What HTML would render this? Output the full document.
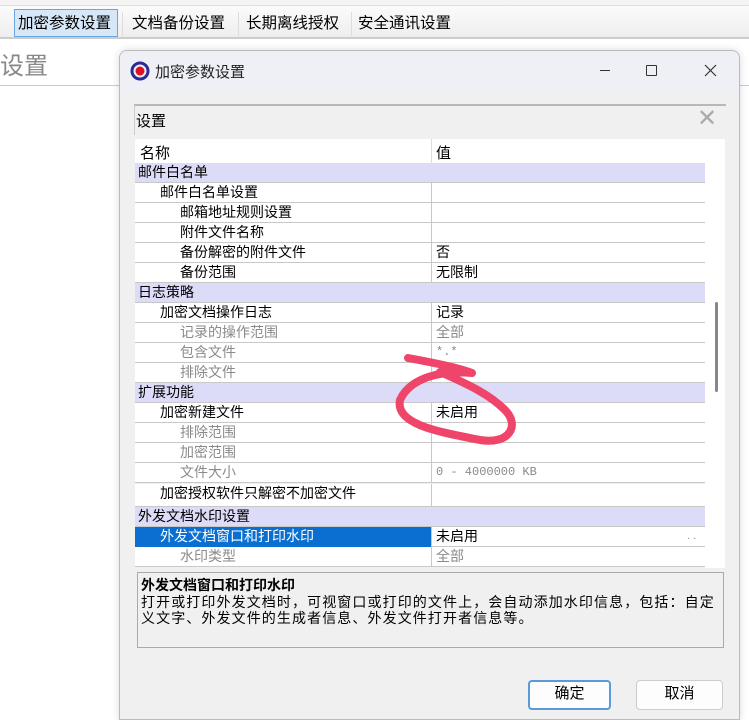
<!DOCTYPE html><html><head><meta charset="utf-8"><style>
*{margin:0;padding:0;box-sizing:border-box}
body{width:749px;height:705px;overflow:hidden;background:#fff;position:relative;font-family:"Liberation Sans","Noto Sans CJK SC",sans-serif;font-size:14px;color:#000}
.a{position:absolute}
.row{position:absolute;left:135px;width:570px;height:20px;border-bottom:1px solid #c8c8c8;background:#fff;line-height:19px;font-size:14px;white-space:nowrap}
.row .v{position:absolute;left:296px;top:0;height:20px;border-left:1px solid #c8c8c8;padding-left:4px}
.cat{background:#dcdcf8}
.g{color:#8a8a8a}
.tb{position:absolute;top:11px;font-size:15.5px;white-space:nowrap}
</style></head><body>
<div class="a" style="left:0;top:0;width:749px;height:6px;background:#f4f4f4;border-bottom:1px solid #ddd"></div>
<div class="a" style="left:0;top:6px;width:749px;height:33px;background:linear-gradient(#fbfbfb,#eeeeee);border-bottom:2px solid #ccc"></div>
<div class="a" style="left:14px;top:9px;width:104px;height:28px;border:1px solid #6aa6dc;background:#d6e8f8"></div>
<div class="tb" style="left:18px">加密参数设置</div>
<div class="tb" style="left:132px">文档备份设置</div>
<div class="tb" style="left:246px">长期离线授权</div>
<div class="tb" style="left:358px">安全通讯设置</div>
<div class="a" style="left:122px;top:12px;width:1px;height:24px;background:#ddd"></div>
<div class="a" style="left:238px;top:12px;width:1px;height:24px;background:#ddd"></div>
<div class="a" style="left:351px;top:12px;width:1px;height:24px;background:#ddd"></div>
<div class="a" style="left:0;top:46px;font-size:24px;color:#888">设置</div>
<div class="a" style="left:0;top:85px;width:749px;height:1px;background:#ccc"></div>
<div class="a" style="left:119px;top:50px;width:621px;height:670px;background:#f0f0f0;border:1px solid #bbb;border-radius:8px 8px 0 0;box-shadow:0 0 8px rgba(0,0,0,.15);overflow:hidden">
<div class="a" style="left:0;top:0;width:621px;height:40px;background:#eff0f6"></div>
</div>
<svg class="a" style="left:130px;top:61px" width="20" height="20" viewBox="0 0 20 20"><circle cx="10" cy="10" r="8" fill="none" stroke="#2a2a9a" stroke-width="3"/><circle cx="10" cy="10" r="4.5" fill="#e01020"/></svg>
<div class="a" style="left:155px;top:61px;font-size:15px;color:#222">加密参数设置</div>
<div class="a" style="left:600px;top:70px;width:10px;height:1px;background:#333"></div>
<div class="a" style="left:646px;top:65px;width:11px;height:11px;border:1px solid #333;border-radius:1px"></div>
<svg class="a" style="left:704px;top:64px" width="13" height="13"><path d="M1,1L12,12M12,1L1,12" stroke="#333" stroke-width="1.2"/></svg>
<div class="a" style="left:134px;top:104px;width:592px;height:31px;background:#f0f0f0;border-top:2px solid #b8b8b8;border-left:1px solid #ccc"></div>
<div class="a" style="left:136px;top:110px;font-size:15px">设置</div>
<div class="a" style="left:697px;top:104px;font-size:24px;color:#aaa">✕</div>
<div class="a" style="left:135px;top:139px;width:590px;height:24px;background:#fff"></div>
<div class="a" style="left:140px;top:142px;font-size:15px">名称</div>
<div class="a" style="left:431px;top:139px;width:1px;height:24px;background:#ddd"></div>
<div class="a" style="left:436px;top:142px;font-size:15px">值</div>
<div class="a" style="left:705px;top:163px;width:20px;height:405px;background:#fff"></div>
<div class="a" style="left:715px;top:302px;width:3px;height:90px;background:#888;border-radius:2px"></div>

<div class="row cat" style="top:163px"><span style="padding-left:3px">邮件白名单</span></div>
<div class="row" style="top:183px"><span style="padding-left:25px">邮件白名单设置</span><span class="v"></span></div>
<div class="row" style="top:203px"><span style="padding-left:45px">邮箱地址规则设置</span><span class="v"></span></div>
<div class="row" style="top:223px"><span style="padding-left:45px">附件文件名称</span><span class="v"></span></div>
<div class="row" style="top:243px"><span style="padding-left:45px">备份解密的附件文件</span><span class="v">否</span></div>
<div class="row" style="top:263px"><span style="padding-left:45px">备份范围</span><span class="v">无限制</span></div>
<div class="row cat" style="top:283px"><span style="padding-left:3px">日志策略</span></div>
<div class="row" style="top:303px"><span style="padding-left:25px">加密文档操作日志</span><span class="v">记录</span></div>
<div class="row g" style="top:323px"><span style="padding-left:45px">记录的操作范围</span><span class="v">全部</span></div>
<div class="row g" style="top:343px"><span style="padding-left:45px">包含文件</span><span class="v" style="font-family:'Liberation Mono',monospace;font-size:12px">*.*</span></div>
<div class="row g" style="top:363px"><span style="padding-left:45px">排除文件</span><span class="v"></span></div>
<div class="row cat" style="top:383px"><span style="padding-left:3px">扩展功能</span></div>
<div class="row" style="top:403px"><span style="padding-left:25px">加密新建文件</span><span class="v">未启用</span></div>
<div class="row g" style="top:423px"><span style="padding-left:45px">排除范围</span><span class="v"></span></div>
<div class="row g" style="top:443px"><span style="padding-left:45px">加密范围</span><span class="v"></span></div>
<div class="row g" style="top:463px"><span style="padding-left:45px">文件大小</span><span class="v" style="font-family:'Liberation Mono',monospace;font-size:12px">0 - 4000000 KB</span></div>
<div class="row" style="top:484px;height:23px"><span style="padding-left:25px">加密授权软件只解密不加密文件</span><span class="v" style="height:23px"></span></div>
<div class="row cat" style="top:507px"><span style="padding-left:3px">外发文档水印设置</span></div>
<div class="row" style="top:527px;background:#fff"><span style="position:absolute;left:0;top:0;width:296px;height:20px;background:#0a6fd0;color:#fff;padding-left:25px">外发文档窗口和打印水印</span><span class="v">未启用</span><span class="a" style="left:552px;top:0;color:#999;font-size:11px">. .</span></div>
<div class="row g" style="top:547px"><span style="padding-left:45px">水印类型</span><span class="v">全部</span></div>

<div class="a" style="left:137px;top:572px;width:587px;height:76px;background:#f0f0f0;border:1px solid #aaa"></div>
<div class="a" style="left:141px;top:575px;font-size:14px;font-weight:bold">外发文档窗口和打印水印</div>
<div class="a" style="left:141px;top:594px;width:582px;font-size:14px;line-height:16px;white-space:nowrap;letter-spacing:1.1px">打开或打印外发文档时，可视窗口或打印的文件上，会自动添加水印信息，包括：自定<br>义文字、外发文件的生成者信息、外发文件打开者信息等。</div>
<div class="a" style="left:528px;top:680px;width:83px;height:30px;background:#fdfdfd;border:2px solid #5a9ad8;border-radius:4px;text-align:center;line-height:24px;font-size:15px">确定</div>
<div class="a" style="left:636px;top:680px;width:87px;height:30px;background:#fdfdfd;border:1px solid #ccc;border-radius:4px;text-align:center;line-height:26px;font-size:15px">取消</div>

<svg class="a" style="left:0;top:0" width="749" height="705"><path d="M408,358 C430,362 460,368 472,373 C440,370 410,378 400,400 C395,425 440,432 480,440 C510,445 520,425 505,410 C490,395 470,385 440,372" fill="none" stroke="#f0456a" stroke-width="8" stroke-linecap="round" stroke-linejoin="round"/></svg>
</body></html>
